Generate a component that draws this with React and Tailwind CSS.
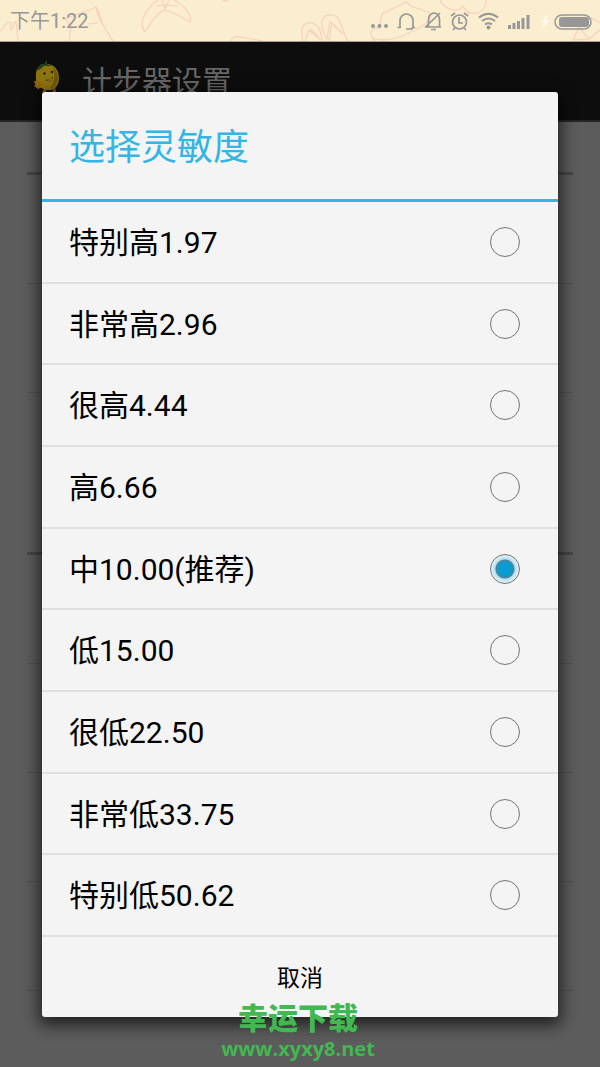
import { useState } from "react";

const options = [
  "特别高1.97",
  "非常高2.96",
  "很高4.44",
  "高6.66",
  "中10.00(推荐)",
  "低15.00",
  "很低22.50",
  "非常低33.75",
  "特别低50.62",
];

function StatusDoodles() {
  return (
    <svg
      className="absolute inset-0 w-full h-full"
      viewBox="0 0 600 41"
      preserveAspectRatio="xMidYMid slice"
      fill="none"
      stroke="#f8d0bb"
      strokeWidth="1.2"
      aria-hidden="true"
    >
      <path d="M0 31C4 29 5 22 9 22C14 22 8 31 11 30C14 29 14 21 16 22C18 27 15 33 19 41" />
      <path d="M69 41L71 27L65 19C76 14 86 12 96 7L99 12L102 23L113 41M96 7L99 18L111 38M71 27L80 26M88 24L98 23" />
      <path d="M158 0C148 7 138 20 144 31C149 32 148 19 164 10C174 12 181 17 190 22C192 14 184 5 174 0M156 6L166 5L178 6M162 0L165 9L169 0" />
      <path d="M223 0C225 2 227 1 228 0" />
      <path d="M231 41C233 35 240 37 246 38L263 41M303 41C298 22 310 18 319 28L323 41M305 41L309 30L321 40L311 29" />
      <path d="M326 38C318 21 322 14 333 15C341 17 340 25 345 35L348 41M327 38L330 22L343 34L332 23M326 38L329 40L332 23" />
      <path d="M375 41C366 32 374 27 379 28L382 14L406 2L411 6L428 12C437 18 422 27 411 32C401 37 387 43 372 38" />
      <path d="M440 0C446 12 460 12 463 6C470 20 488 12 486 0M463 6L469 14" />
      <path d="M573 40L579 27L589 39L573 40M579 27L591 18L600 23M589 39L600 30" />
    </svg>
  );
}

function StatusIcons() {
  return (
    <svg width="226" height="24" viewBox="0 0 226 24" fill="none" stroke="#979797" strokeWidth="1.700" role="img" aria-label="状态图标">
      <g fill="#979797" stroke="none">
        <circle cx="4" cy="17" r="2" />
        <circle cx="10.500" cy="17" r="2" />
        <circle cx="17" cy="17" r="2" />
      </g>
      <path d="M31 18V11.500a6.500 6.500 0 0 1 13 0V18M28.500 18.500H32M43 18.500H46M44 18q0 2-3 2H37" />
      <path d="M57 18H72M59.500 18V11q0-6 5-7q6 0 6 7V18M62 20.500H67M56 18.500L71 4" />
      <circle cx="90.500" cy="13" r="7" />
      <path d="M90 8V14H94M82 7L86 4M95 4L99 7M86 19L84 21M95 19L97 21" />
      <path d="M110 8.500Q119.500 1 129 8.500M113 12Q119.500 7 126 12M116 15.500Q119.500 13 123 15.500" strokeWidth="2" />
      <circle cx="119.500" cy="18.500" r="2" fill="#979797" stroke="none" />
      <path d="M140.500 20V16M145 20V14M149.500 20V12M154 20V9M159 20V6" strokeWidth="3" />
      <path d="M177 6L172 14H175L173 20L181 11H177L179 6Z" fill="#fff9ec" stroke="none" />
      <rect x="186" y="6" width="36" height="14" rx="7" strokeWidth="1.500" />
      <rect x="190" y="8" width="30" height="10" rx="3" fill="#979797" stroke="none" />
    </svg>
  );
}

function MelonLogo() {
  return (
    <svg width="34" height="46" viewBox="0 0 34 46" aria-hidden="true">
      <path d="M8 24L4 28L8 31L15 28M15 30L12 34L17 35M25 29L26 34L22 34" fill="#815713" />
      <path d="M15 6C24 5 29 12 29 20C29 28 24 33 17 32C9 31 5 25 6 17C6 10 10 6 15 6Z" fill="#8b750c" />
      <path d="M23 9C31 17 29 28 20 31C24 25 26 18 23 9Z" fill="#6e570b" />
      <path d="M6 12L11 6L14 6L17 2L17 6L22 8L14 8L9 12Z" fill="#24401a" />
      <path d="M5 26L4 23L8 23L12 24L12 28L7 30Z" fill="#946212" />
      <circle cx="14.500" cy="15.500" r="1.300" fill="#222012" />
      <circle cx="22" cy="14" r="1.300" fill="#222012" />
      <path d="M16 22Q20 23 23 19Q22 25 16 22Z" fill="#b6a576" stroke="#503b0d" strokeWidth=".8" />
    </svg>
  );
}

function SettingsGroup({ rows }) {
  return (
    <div className="border-t-3 border-[#464646]">
      {rows.map((row) => (
        <div key={row} className="h-[109px] border-b border-[#515151]" />
      ))}
    </div>
  );
}

function SensitivityDialog() {
  const [selected, setSelected] = useState(4);

  return (
    <div
      role="dialog"
      aria-labelledby="dialog-title"
      className="w-full flex flex-col min-h-[925px] rounded-[3px] bg-[#f4f4f4] shadow-[0_5px_16px_3px_rgba(0,0,0,0.65)]"
    >
      <h2 id="dialog-title" className="h-[110px] shrink-0 flex items-center pt-1 px-[27px] border-b-3 border-[#33b5e5] text-4xl text-[#33b5e5]">
        选择灵敏度
      </h2>
      <div role="radiogroup" aria-labelledby="dialog-title" className="flex-1 flex flex-col">
        {options.map((option, i) => (
          <label
            key={option}
            className="flex-1 flex items-center justify-between pl-[27px] pr-[38px] border-b-2 border-[#dfdfdf] text-[30px] leading-9 text-black"
          >
            <span className="pt-[2px]">{option}</span>
            <input
              type="radio"
              name="sensitivity"
              checked={selected === i}
              onChange={() => setSelected(i)}
              className="appearance-none size-[30px] shrink-0 rounded-full border border-[#747474] checked:bg-[radial-gradient(circle,#0a9bd0_0_7px,#4287a3_8px_9px,#b5def0_10px,#e5f2f8_14px)]"
            />
          </label>
        ))}
      </div>
      <button type="button" className="h-20 shrink-0 pt-1 text-[23px] text-black">
        取消
      </button>
    </div>
  );
}

export default function App() {
  return (
    <div className="relative min-h-screen flex flex-col bg-[#5c5c5c] font-[Roboto,'Noto_Sans_CJK_SC',sans-serif]">
      <div className="relative h-[42px] shrink-0 flex items-center justify-between pl-[10px] pr-[5px] bg-[#faeecf] border-b border-[#aaa28e]">
        <StatusDoodles />
        <time className="relative text-xl text-[#979797]">下午1:22</time>
        <div className="relative">
          <StatusIcons />
        </div>
      </div>

      <header className="h-20 shrink-0 flex items-center gap-[18px] pl-[30px] bg-[#0d0d0d] border-b-2 border-[#252525]">
        <MelonLogo />
        <h1 className="pt-[2px] text-[30px] leading-9 text-[#666]">计步器设置</h1>
      </header>

      <main className="flex-1 px-[27px] pt-[50px]">
        <SettingsGroup rows={["switch", "sensitivity"]} />
        <div className="h-[159px]" />
        <SettingsGroup rows={["step", "weight", "unit", "about"]} />
      </main>

      <div className="absolute inset-0 flex items-start px-[42px] pt-[92px]">
        <SensitivityDialog />
      </div>

      <div className="absolute inset-x-0 bottom-0 pb-1 pr-1 text-center text-[#42b851]">
        <p className="text-[30px] leading-8 font-black">幸运下载</p>
        <a href="#" className="block text-xl leading-7 font-bold font-['Open_Sans',sans-serif]">
          www.xyxy8.net
        </a>
      </div>
    </div>
  );
}
